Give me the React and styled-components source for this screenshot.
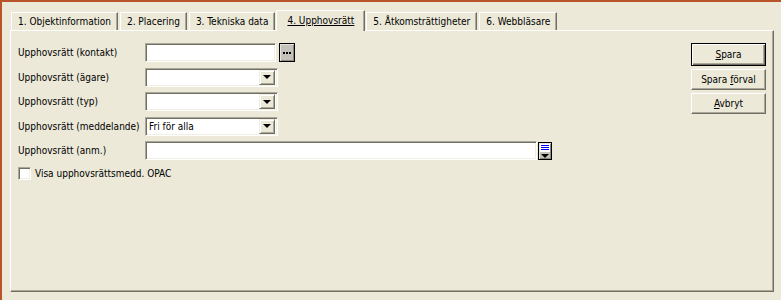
import styled, { createGlobalStyle } from 'styled-components';

const Global = createGlobalStyle`
html, body { margin:0; padding:0; background:#ECE9D8; }
body { font-family: Tahoma, "DejaVu Sans Condensed", "Liberation Sans", sans-serif; font-size:10px; color:#000; }
`;

const Frame = styled.div`
border-top: 2px solid #B8532A;
border-left: 2px solid #B8532A;
background: #ECE9D8;
padding: 8px 7px 0 8px;
box-sizing: content-box;
display: flex;
flex-direction: column;
width: 764px;
height: 290px;
`;

const TabStrip = styled.div`
display: flex;
align-items: flex-end;
height: 20px;
padding-left: 1px;
gap: 2px;
position: relative;
z-index: 1;
`;

const Tab = styled.div`
height: ${p => (p.$active ? '21px' : '18px')};
box-sizing: border-box;
padding: 0 ${p => (p.$active ? '10px' : '6px')};
margin: ${p => (p.$active ? '0 -1px -1px' : '0')};
display: flex;
align-items: center;
padding-bottom: ${p => (p.$active ? '2px' : '0')};
border-top: 1px solid #FFFFFF;
border-left: 1px solid #FFFFFF;
border-right: 1px solid #716F64;
box-shadow: inset -1px 0 #ACA899;
background: #ECE9D8;
white-space: nowrap;
span { text-decoration: ${p => (p.$active ? 'underline' : 'none')}; }
`;

const Panel = styled.div`
height: 262px;
box-sizing: border-box;
border-top: 1px solid #FFFFFF;
border-left: 1px solid #FFFFFF;
border-right: 1px solid #716F64;
border-bottom: 1px solid #716F64;
box-shadow: inset -1px -1px #ACA899;
padding: 12px 7px 0 7px;
display: flex;
justify-content: space-between;
align-items: flex-start;
`;

const Form = styled.div`
display: flex;
flex-direction: column;
gap: 5.5px;
`;

const Row = styled.div`
display: flex;
align-items: center;
height: 19px;
`;

const Label = styled.div`
width: 127px;
white-space: nowrap;
`;

const sunken = `
box-sizing: border-box;
height: 19px;
background: #FFFFFF;
border: 1px solid;
border-color: #ACA899 #FFFFFF #FFFFFF #ACA899;
box-shadow: inset 1px 1px #716F64, inset -1px -1px #F1EFE2;
`;

const TextBox = styled.div`
${sunken}
width: ${p => p.$w}px;
`;

const Combo = styled.div`
${sunken}
width: 133px;
display: flex;
align-items: center;
justify-content: space-between;
padding: 2px;
`;

const ComboText = styled.span`
padding-left: 1px;
`;

const DropBtn = styled.div`
width: 16px;
height: 15px;
box-sizing: border-box;
background: #ECE9D8;
border: 1px solid;
border-color: #F1EFE2 #716F64 #716F64 #F1EFE2;
box-shadow: inset 1px 1px #FFFFFF, inset -1px -1px #ACA899;
display: flex;
align-items: center;
justify-content: center;
&::after {
  content: '';
  border-left: 4px solid transparent;
  border-right: 4px solid transparent;
  border-top: 4px solid #000;
}
`;

const DotsBtn = styled.div`
width: 16px;
height: 19px;
box-sizing: border-box;
margin-left: 3px;
border: 1px solid #000;
background: #C4C2BA;
box-shadow: inset 1px 1px #E4E2DA, inset -1px -1px #8A887E;
display: flex;
align-items: center;
justify-content: center;
gap: 1px;
i {
  width: 2px;
  height: 2px;
  background: #000;
}
`;

const ListBtn = styled.div`
width: 14px;
height: 18px;
box-sizing: border-box;
margin-left: 1px;
border: 1px solid #000;
background: #C4C2BA;
box-shadow: inset 1px 1px #E4E2DA, inset -1px -1px #8A887E;
display: flex;
align-items: center;
justify-content: center;
`;

const CheckRow = styled.div`
display: flex;
align-items: center;
gap: 4px;
margin-top: 1px;
`;

const CheckBox = styled.div`
width: 13px;
height: 13px;
box-sizing: border-box;
background: #FFFFFF;
border: 1px solid;
border-color: #ACA899 #FFFFFF #FFFFFF #ACA899;
box-shadow: inset 1px 1px #716F64, inset -1px -1px #F1EFE2;
`;

const Buttons = styled.div`
display: flex;
flex-direction: column;
gap: 3px;
`;

const Btn = styled.div`
width: 75px;
height: ${p => (p.$default ? '23px' : '21px')};
box-sizing: border-box;
background: #ECE9D8;
border: 1px solid;
border-color: ${p => (p.$default ? '#000' : '#FFFFFF #716F64 #716F64 #FFFFFF')};
box-shadow: ${p => (p.$default
    ? 'inset 1px 1px #FFFFFF, inset -1px -1px #716F64, inset -2px -2px #ACA899'
    : 'inset -1px -1px #ACA899')};
display: flex;
align-items: center;
justify-content: center;
u { text-decoration: underline; }
`;

const tabs = ['1. Objektinformation', '2. Placering', '3. Tekniska data', '4. Upphovsrätt', '5. Åtkomsträttigheter', '6. Webbläsare'];

function ListIcon() {
    return (
        <svg width="10" height="14" viewBox="0 0 10 14">
            <rect x="0" y="0" width="10" height="8" fill="#FFFFFF" />
            <rect x="1" y="1" width="8" height="1" fill="#0000FF" />
            <rect x="1" y="3" width="8" height="1" fill="#0000FF" />
            <rect x="1" y="5" width="8" height="1" fill="#0000FF" />
            <polygon points="1,10 9,10 5,14" fill="#000" />
        </svg>
    );
}

export default function App() {
    return <>
        <Global />
        <Frame>
            <TabStrip>
                {tabs.map((t, i) =>
                    <Tab key={i} $active={i === 3}><span>{t}</span></Tab>
                )}
            </TabStrip>
            <Panel>
                <Form>
                    <Row>
                        <Label>Upphovsrätt (kontakt)</Label>
                        <TextBox $w={131} />
                        <DotsBtn><i /><i /><i /></DotsBtn>
                    </Row>
                    <Row>
                        <Label>Upphovsrätt (ägare)</Label>
                        <Combo><ComboText></ComboText><DropBtn /></Combo>
                    </Row>
                    <Row>
                        <Label>Upphovsrätt (typ)</Label>
                        <Combo><ComboText></ComboText><DropBtn /></Combo>
                    </Row>
                    <Row>
                        <Label>Upphovsrätt (meddelande)</Label>
                        <Combo><ComboText>Fri för alla</ComboText><DropBtn /></Combo>
                    </Row>
                    <Row>
                        <Label>Upphovsrätt (anm.)</Label>
                        <TextBox $w={392} />
                        <ListBtn><ListIcon /></ListBtn>
                    </Row>
                    <CheckRow>
                        <CheckBox />
                        <span>Visa upphovsrättsmedd. OPAC</span>
                    </CheckRow>
                </Form>
                <Buttons>
                    <Btn $default><span><u>S</u>para</span></Btn>
                    <Btn><span>Spara <u>f</u>örval</span></Btn>
                    <Btn><span><u>A</u>vbryt</span></Btn>
                </Buttons>
            </Panel>
        </Frame>
    </>;
}
